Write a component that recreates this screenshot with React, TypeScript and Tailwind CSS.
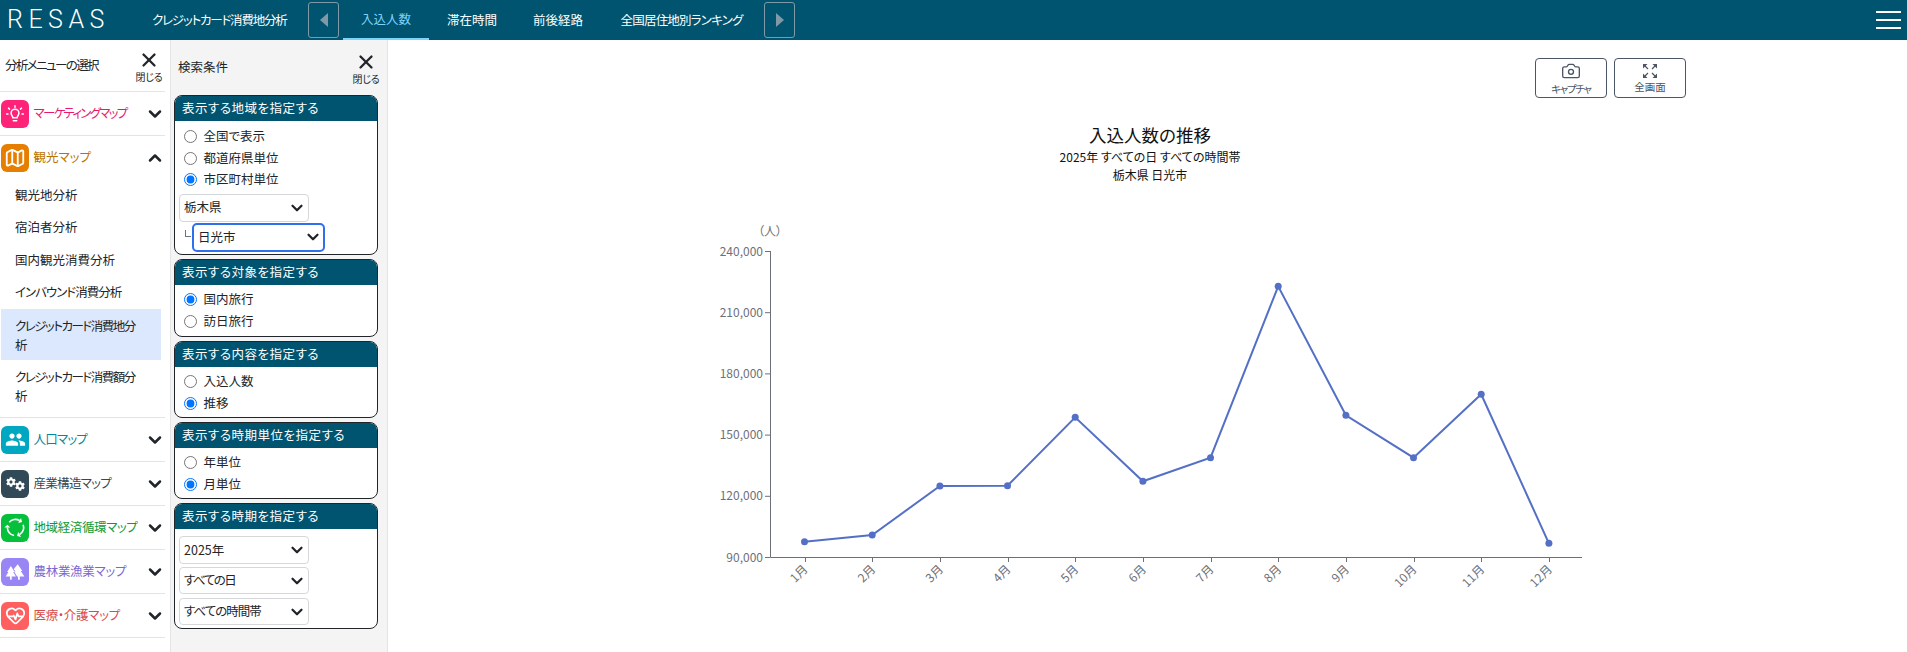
import { Camera, ChevronDown, ChevronUp, HeartPulse, Map as MapIcon, X } from "lucide-react"
import { FaCog } from "react-icons/fa"
import { MdPeople } from "react-icons/md"

const tabs = ["入込人数", "滞在時間", "前後経路", "全国居住地別ランキング"]

const chartPoints = [
  [804.5, 541.7],
  [872.2, 535],
  [939.9, 486],
  [1007.5, 485.7],
  [1075.2, 417.3],
  [1142.9, 481.3],
  [1210.5, 457.7],
  [1278.2, 286.3],
  [1345.9, 415.3],
  [1413.5, 457.7],
  [1481.2, 394.3],
  [1548.9, 543.3],
]
const months = ["1月", "2月", "3月", "4月", "5月", "6月", "7月", "8月", "9月", "10月", "11月", "12月"]
const yTicks = [
  ["240,000", 251],
  ["210,000", 312.2],
  ["180,000", 373.4],
  ["150,000", 434.6],
  ["120,000", 495.8],
  ["90,000", 557],
] as const

function BulbIcon() {
  return (
    <svg viewBox="0 0 24 24" className="size-[20px]" fill="none" stroke="white" strokeWidth="1.8" strokeLinecap="round">
      <path d="M9.5 16.5c0-1.8-2.2-2.6-2.2-5.6a4.7 4.7 0 0 1 9.4 0c0 3-2.2 3.8-2.2 5.6z" />
      <path d="M10 20h4" />
      <path d="M12 2.2v1.6M4.2 5l1.2 1.1M19.800 5l-1.200 1.100M2 12h1.600M20.400 12H22" />
    </svg>
  )
}

function RecycleIcon() {
  return (
    <svg viewBox="0 0 24 24" className="size-[23px]" fill="none" stroke="white" strokeWidth="1.7">
      <path d="M5.49 6.54A8.500 8.500 0 0 1 16.25 4.640" />
      <path d="M19.99 9.09A8.500 8.500 0 0 1 16.25 19.36" />
      <path d="M10.52 20.37A8.500 8.500 0 0 1 3.500 12" />
      <path d="M18.85 6.140 17.75 2.040 14.75 7.240zM13.65 20.860 17.75 21.960 14.75 16.760zM3.500 9 0.500 12H6.500z" fill="white" stroke="none" />
    </svg>
  )
}

function TreesIcon() {
  return (
    <svg viewBox="0 0 24 24" className="size-[22px]" fill="white">
      <path d="M7.500 5.500 11.500 12H10l3 5H8.400v3.500H6.600V17H1.800l3-5H3.400z" />
      <path d="M15 3.500 20 11h-1.700l3.900 6h-5v3.500h-1.900V17h-1l-3.300-5.500h1.600L10.500 9z" />
    </svg>
  )
}

function ExpandIcon() {
  return (
    <svg viewBox="0 0 16 16" className="size-[16px]" fill="#4b5563" stroke="#4b5563" strokeWidth="1.2">
      <path d="M1 1h4.500L1 5.500zM15 1h-4.500L15 5.500zM1 15h4.500L1 10.500zM15 15h-4.500L15 10.500z" stroke="none" />
      <path d="M3 3l3 3M13 3l-3 3M3 13l3-3M13 13l-3-3" />
    </svg>
  )
}

function MenuRow({
  label,
  icon,
  bg,
  color,
  tracking = "",
  open = false,
}: {
  label: string
  icon: React.ReactNode
  bg: string
  color: string
  tracking?: string
  open?: boolean
}) {
  return (
    <div className={`flex items-center pl-px ${open ? "h-[43px]" : "h-[44px] border-b border-[#e4e4e4]"}`}>
      <div className={`flex size-[28px] shrink-0 items-center justify-center rounded-[6px] ${bg}`}>{icon}</div>
      <span className={`ml-[4.500px] flex-1 whitespace-nowrap text-[12.5px] ${color} ${tracking}`}>{label}</span>
      {open ? (
        <ChevronUp size={20} strokeWidth={3} className="text-[#212529]" />
      ) : (
        <ChevronDown size={20} strokeWidth={3} className="text-[#212529]" />
      )}
    </div>
  )
}

function CloseButton() {
  return (
    <div className="flex w-[30px] flex-col items-center leading-none">
      <X size={22} strokeWidth={2.5} className="text-[#212529]" />
      <span className="mt-px text-[10px] tracking-[-0.3px] text-[#212529]">閉じる</span>
    </div>
  )
}

function SearchCard({ title, children, className = "" }: { title: string; children: React.ReactNode; className?: string }) {
  return (
    <section className="overflow-hidden rounded-[8px] border border-[#212529] bg-white">
      <h2 className="-mx-px -mt-px flex h-[26px] items-center bg-[#00546f] px-[8px] text-[12.5px] font-normal tracking-[0.5px] text-white">{title}</h2>
      <div className={className}>{children}</div>
    </section>
  )
}

function Radio({ group, label, checked = false }: { group: string; label: string; checked?: boolean }) {
  return (
    <label className="flex h-[21.500px] items-center text-[12.5px] text-[#212529]">
      <input type="radio" name={group} defaultChecked={checked} className="m-0 size-[13px] accent-[#0075ff]" />
      <span className="ml-[7px]">{label}</span>
    </label>
  )
}

function Select({ value, focused = false, className = "" }: { value: string; focused?: boolean; className?: string }) {
  return (
    <div className={`relative ${className}`}>
      <select
        defaultValue={value}
        className={`block h-full w-full appearance-none bg-white pl-[4px] text-[12.5px] text-[#212529] outline-none ${
          focused ? "rounded-[5px] border-2 border-[#2f6fed]" : "rounded-[4px] border border-[#d5d7da]"
        }`}
      >
        <option>{value}</option>
      </select>
      <ChevronDown size={18} strokeWidth={3} className="pointer-events-none absolute right-[3px] top-1/2 -translate-y-1/2 text-[#212529]" />
    </div>
  )
}

function CaptureButton({ label, icon, tracking = "" }: { label: string; icon: React.ReactNode; tracking?: string }) {
  return (
    <button className="flex h-[40px] w-[72px] flex-col items-center justify-center rounded-[4px] border border-[#4b5563] bg-white leading-none text-[#4b5563]">
      {icon}
      <span className={`mt-[3px] text-[10.5px] ${tracking}`}>{label}</span>
    </button>
  )
}

export default function App() {
  return (
    <div className="flex h-screen flex-col overflow-hidden bg-white font-['Noto_Sans_CJK_JP','Noto_Sans',sans-serif] [font-feature-settings:'palt']">
      <header className="flex h-[40px] shrink-0 items-center bg-[#00546f] text-white">
        <div className="ml-[7px] w-[145px] font-['Roboto',sans-serif] text-[25px] font-light tracking-[5.5px]">RESAS</div>
        <div className="w-[156px] whitespace-nowrap text-[12.5px] tracking-[-1.2px]">クレジットカード消費地分析</div>
        <button className="flex h-[36px] w-[31px] items-center justify-center rounded-[3px] border border-[#7f9aa6]">
          <span className="h-0 w-0 border-y-[7px] border-r-[8px] border-y-transparent border-r-[#7f9aa6]" />
        </button>
        <nav className="ml-[4px] flex h-full w-[421px] text-[12.5px]">
          {tabs.map((t, i) => (
            <div
              key={t}
              className={`flex h-full items-center justify-center whitespace-nowrap ${
                i === 0
                  ? "w-[86px] border-b-2 border-[#7dd3fc] text-[#7dd3fc]"
                  : i === 3
                    ? "ml-[19px] w-[123px] tracking-[-0.8px]"
                    : "w-[86px]"
              }`}
            >
              {t}
            </div>
          ))}
        </nav>
        <button className="flex h-[36px] w-[31px] items-center justify-center rounded-[3px] border border-[#7f9aa6]">
          <span className="h-0 w-0 border-y-[7px] border-l-[8px] border-y-transparent border-l-[#7f9aa6]" />
        </button>
        <div className="ml-auto mr-[6px] flex w-[25px] flex-col gap-[6px]">
          <span className="h-[2px] bg-white" />
          <span className="h-[2px] bg-white" />
          <span className="h-[2px] bg-white" />
        </div>
      </header>

      <div className="flex min-h-0 flex-1">
        <aside className="w-[171px] shrink-0 border-r border-[#e4e4e4] pr-[5px]">
          <div className="flex h-[52px] items-center justify-between border-b border-[#e4e4e4] pl-[5px] pr-[1px] text-[12.5px] text-[#212529]">
            <span className="whitespace-nowrap tracking-[-1.6px]">分析メニューの選択</span>
            <CloseButton />
          </div>
          <MenuRow label="マーケティングマップ" icon={<BulbIcon />} bg="bg-[#ff2279]" color="text-[#e8196c]" tracking="tracking-[-1.7px]" />
          <MenuRow label="観光マップ" icon={<MapIcon size={22} color="white" strokeWidth={2} />} bg="bg-[#e67e00]" color="text-[#b97300]" open />
          <div className="border-b border-[#e4e4e4] pb-[6px] text-[12.5px] text-[#212529]">
            <div className="flex h-[32.500px] items-center pl-[15px]">観光地分析</div>
            <div className="flex h-[32.500px] items-center pl-[15px]">宿泊者分析</div>
            <div className="flex h-[32.500px] items-center pl-[15px]">国内観光消費分析</div>
            <div className="flex h-[32.500px] items-center pl-[15px] tracking-[-1px]">インバウンド消費分析</div>
            <div className="ml-px mr-[4px] flex h-[51px] items-center whitespace-pre-line bg-[#dbe8fd] pl-[14px] leading-[19px] tracking-[-1.500px]">
              {"クレジットカード消費地分\n析"}
            </div>
            <div className="flex h-[51px] items-center whitespace-pre-line pl-[15px] leading-[19px] tracking-[-1.500px]">
              {"クレジットカード消費額分\n析"}
            </div>
          </div>
          <MenuRow label="人口マップ" icon={<MdPeople size={21} color="white" />} bg="bg-[#00a7c0]" color="text-[#008a9e]" tracking="tracking-[-0.8px]" />
          <MenuRow
            label="産業構造マップ"
            icon={
              <div className="flex text-white">
                <FaCog size={10} className="-translate-y-[2px] translate-x-[1px]" />
                <FaCog size={10} className="translate-y-[2px]" />
              </div>
            }
            bg="bg-[#324a57]"
            color="text-[#324a57]"
            tracking="tracking-[-0.7px]"
          />
          <MenuRow label="地域経済循環マップ" icon={<RecycleIcon />} bg="bg-[#06c03c]" color="text-[#0a9a3a]" tracking="tracking-[-0.4px]" />
          <MenuRow label="農林業漁業マップ" icon={<TreesIcon />} bg="bg-[#9a85f5]" color="text-[#7a68d0]" tracking="tracking-[-0.3px]" />
          <MenuRow label="医療・介護マップ" icon={<HeartPulse size={21} color="white" strokeWidth={2} />} bg="bg-[#ff5f5f]" color="text-[#d94b4b]" tracking="tracking-[-0.3px]" />
        </aside>

        <aside className="w-[217px] shrink-0 border-r border-[#e4e4e4] bg-[#f4f4f4] px-[3px]">
          <div className="flex h-[55px] items-center justify-between pl-[4px] text-[12.5px] text-[#212529]">
            <span>検索条件</span>
            <div className="mr-[3px]">
              <CloseButton />
            </div>
          </div>
          <div className="flex w-[204px] flex-col gap-[4px]">
            <SearchCard title="表示する地域を指定する" className="h-[133px] px-[4px] pt-[5px]">
              <div className="pl-[4.500px]">
                <Radio group="area" label="全国で表示" />
                <Radio group="area" label="都道府県単位" />
                <Radio group="area" label="市区町村単位" checked />
              </div>
              <Select value="栃木県" className="mt-[3px] h-[28px] w-[130px]" />
              <div className="mt-px flex items-center">
                <span className="mt-[-8px] ml-[6px] h-[7px] w-[6px] border-b border-l border-[#6b7280]" />
                <Select value="日光市" focused className="ml-px h-[29px] w-[133px]" />
              </div>
            </SearchCard>
            <SearchCard title="表示する対象を指定する" className="h-[51px] px-[8.500px] pt-[4px]">
              <Radio group="target" label="国内旅行" checked />
              <Radio group="target" label="訪日旅行" />
            </SearchCard>
            <SearchCard title="表示する内容を指定する" className="h-[50px] px-[8.500px] pt-[4px]">
              <Radio group="content" label="入込人数" />
              <Radio group="content" label="推移" checked />
            </SearchCard>
            <SearchCard title="表示する時期単位を指定する" className="h-[50px] px-[8.500px] pt-[4px]">
              <Radio group="unit" label="年単位" />
              <Radio group="unit" label="月単位" checked />
            </SearchCard>
            <SearchCard title="表示する時期を指定する" className="flex h-[99px] flex-col gap-[3px] px-[4px] pt-[7px]">
              <Select value="2025年" className="h-[28px] w-[130px]" />
              <Select value="すべての日" className="h-[27px] w-[130px] tracking-[-1.5px]" />
              <Select value="すべての時間帯" className="mt-px h-[27px] w-[130px] tracking-[-1px]" />
            </SearchCard>
          </div>
        </aside>

        <main className="min-w-0 flex-1 pl-[226px] pr-[221px] pt-[18px]">
          <div className="flex justify-end gap-[7px]">
            <CaptureButton label="キャプチャ" tracking="tracking-[-1.300px]" icon={<Camera size={20} strokeWidth={1.6} />} />
            <CaptureButton label="全画面" icon={<ExpandIcon />} />
          </div>
          <div className="mt-[24px] text-center text-[#111]">
            <h1 className="text-[17.5px] font-normal leading-[26px]">入込人数の推移</h1>
            <p className="text-[12px] leading-[18px]">2025年 すべての日 すべての時間帯</p>
            <p className="text-[12px] leading-[18px]">栃木県 日光市</p>
          </div>
          <svg viewBox="614 200 1072 400" className="mt-[16px] block h-[400px] w-[1072px]" fontSize="12" fill="#6e7079">
            <text x="770" y="236" textAnchor="middle">（人）</text>
            <path d="M770.500 251V557.500H1582" fill="none" stroke="#6e7079" />
            {yTicks.map(([label, y]) => (
              <g key={label}>
                <path d={`M765 ${y + 0.5}h5`} stroke="#6e7079" />
                <text x="763" y={y + 4.5} textAnchor="end">{label}</text>
              </g>
            ))}
            {months.map((m, i) => {
              const x = chartPoints[i][0]
              return (
                <g key={m}>
                  <path d={`M${Math.round(x) + 0.5} 557v5`} stroke="#6e7079" />
                  <text transform={`translate(${x + 4} 570) rotate(-45)`} textAnchor="end">{m}</text>
                </g>
              )
            })}
            <polyline points={chartPoints.map((p) => p.join(",")).join(" ")} fill="none" stroke="#5470c6" strokeWidth="2" />
            {chartPoints.map(([x, y]) => (
              <circle key={x} cx={x} cy={y} r="3.500" fill="#5470c6" />
            ))}
          </svg>
        </main>
      </div>
    </div>
  )
}
